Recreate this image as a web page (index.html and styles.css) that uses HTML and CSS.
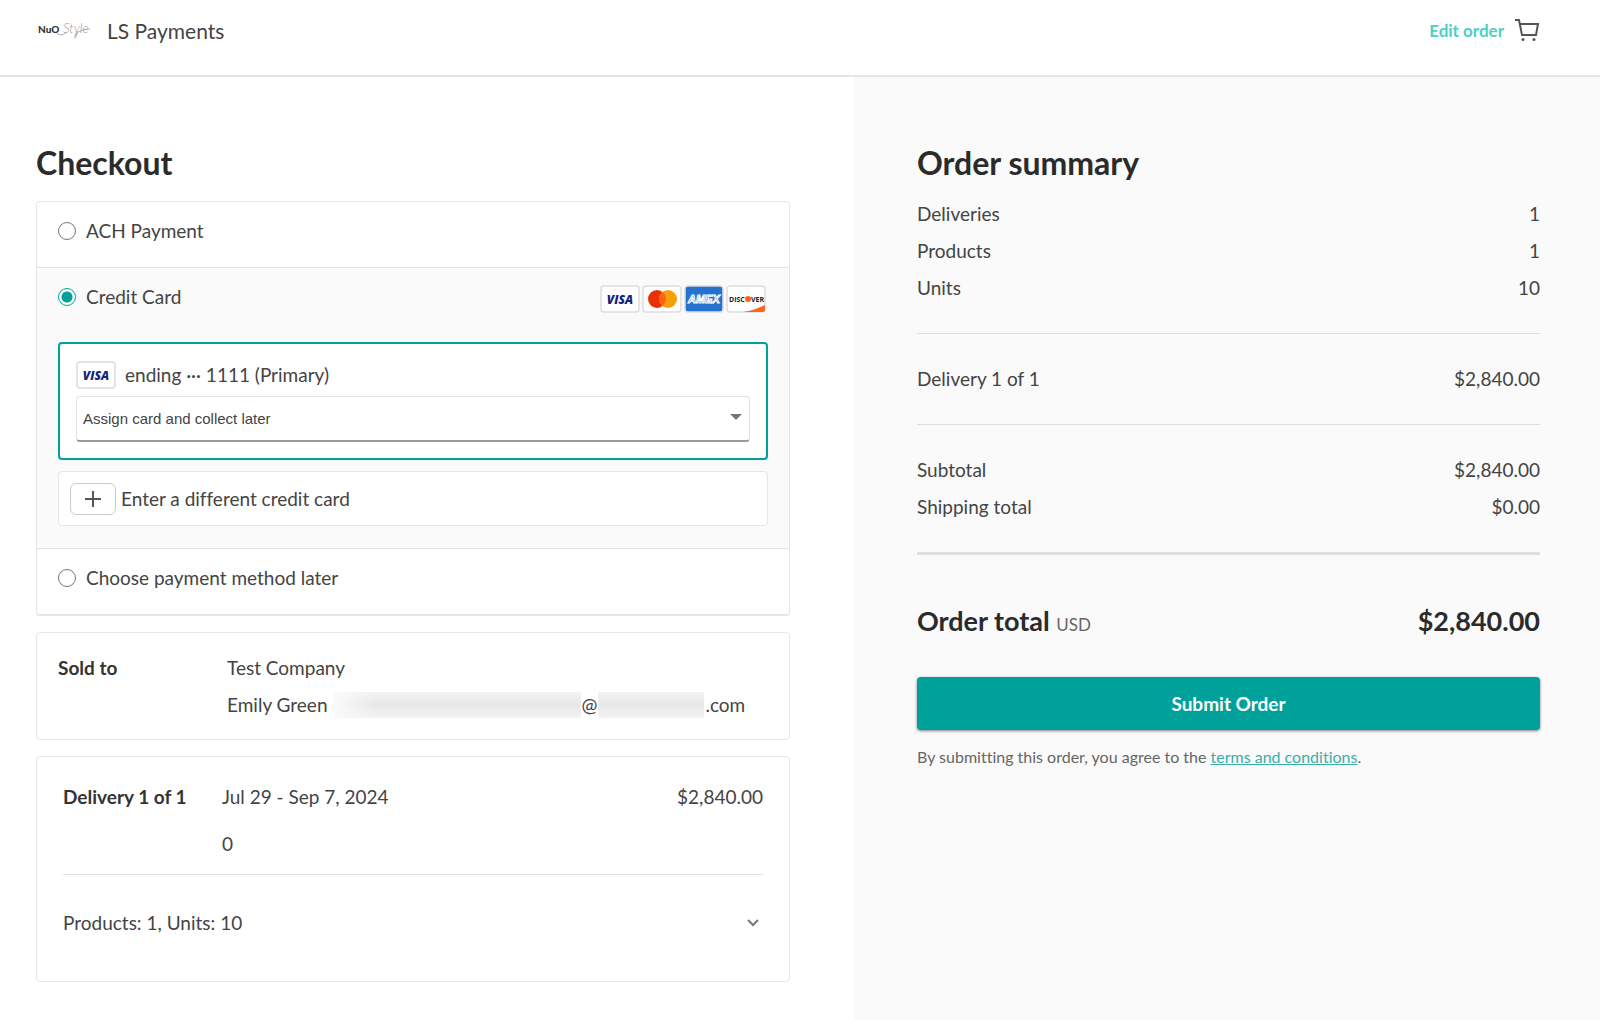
FILE: index.html
```
<!DOCTYPE html>
<html lang="en">
<head>
  <meta charset="UTF-8">
  <meta name="viewport" content="width=device-width, initial-scale=1">
  <title>Checkout - LS Payments</title>
  <link rel="stylesheet" href="styles.css">
</head>
<body>
  <header class="topbar">
    <div class="brand">
      <div class="logo">
        <svg width="58" height="58" viewBox="0 0 58 58" aria-hidden="true">
          <text class="logo-name" x="2" y="32">NuO</text>
          <text class="logo-script" x="27" y="32">Style</text>
          <path d="M21 32c3 3 7 2 10-1M41 30c0 7-3 9-2 5 2-5 7-6 15-7" fill="none" stroke="#aaa" stroke-width="1"/>
        </svg>
      </div>
      <span class="brand-name">LS Payments</span>
    </div>
    <a class="edit-link" href="#">
      Edit order
      <svg width="26" height="24" viewBox="0 0 26 24" fill="none" stroke="#555" stroke-width="2" aria-hidden="true">
        <path d="M1 2h4l3 15h14l2-11H6"/>
        <circle cx="9" cy="21.500" r="1.500" fill="#555" stroke="none"/>
        <circle cx="20" cy="21.500" r="1.500" fill="#555" stroke="none"/>
      </svg>
    </a>
  </header>

  <div class="page">
    <main class="checkout">
      <h1>Checkout</h1>

      <form class="card payment" id="payment-form">
        <div class="method">
          <label class="option"><input type="radio" name="method"> ACH Payment</label>
        </div>

        <div class="method method-active">
          <div class="method-head">
            <label class="option"><input type="radio" name="method" checked> Credit Card</label>
            <div class="card-logos">
              <svg class="pay-icon" viewBox="0 0 40 28" role="img" aria-label="Visa">
                <rect x="1" y="1" width="38" height="26" rx="3" fill="#fff" stroke="#ddd" stroke-width="1.500"/>
                <text class="visa-text" x="20" y="19">VISA</text>
              </svg>
              <svg class="pay-icon" viewBox="0 0 40 28" role="img" aria-label="Mastercard">
                <rect x="1" y="1" width="38" height="26" rx="3" fill="#fff" stroke="#ddd" stroke-width="1.500"/>
                <circle cx="15" cy="14" r="9" fill="#eb2f06"/>
                <circle cx="26" cy="14" r="9" fill="#f79e0b"/>
                <path d="M20.500 6.900a9 9 0 0 1 0 14.200a9 9 0 0 1 0-14.200z" fill="#ff6410"/>
              </svg>
              <svg class="pay-icon" viewBox="0 0 40 28" role="img" aria-label="American Express">
                <rect x="1" y="1" width="38" height="26" rx="3" fill="#2472ce" stroke="#ddd" stroke-width="1.500"/>
                <text class="amex-text" x="20" y="18">AMEX</text>
              </svg>
              <svg class="pay-icon" viewBox="0 0 40 28" role="img" aria-label="Discover">
                <rect x="1" y="1" width="38" height="26" rx="3" fill="#fff" stroke="#ddd" stroke-width="1.500"/>
                <path d="M17 27C25 26 33 23 39 20v5q0 2-2 2z" fill="#ff6320"/>
                <text class="discover-text" x="3" y="17">DISC</text>
                <circle cx="22" cy="14" r="3" fill="#ff6320"/>
                <text class="discover-text" x="25" y="17">VER</text>
              </svg>
            </div>
          </div>

          <div class="saved-card">
            <div class="saved-name">
              <svg class="pay-icon" viewBox="0 0 40 28" role="img" aria-label="Visa">
                <rect x="1" y="1" width="38" height="26" rx="3" fill="#fff" stroke="#ddd" stroke-width="1.500"/>
                <text class="visa-text" x="20" y="19">VISA</text>
              </svg>
              <span>ending ··· 1111 (Primary)</span>
            </div>
            <div class="select-wrap">
              <select aria-label="Card collection">
                <option>Assign card and collect later</option>
              </select>
              <svg class="select-arrow" width="12" height="6" viewBox="0 0 12 6" aria-hidden="true"><path d="M0 0h12L6 6z" fill="#777"/></svg>
            </div>
          </div>

          <div class="new-card">
            <button class="add-btn" type="button" id="add-card" aria-labelledby="add-card-label">
              <svg width="16" height="16" viewBox="0 0 16 16" fill="none" stroke="#555" stroke-width="2" aria-hidden="true"><path d="M8 0v16M0 8h16"/></svg>
            </button>
            <label for="add-card" id="add-card-label">Enter a different credit card</label>
          </div>
        </div>

        <div class="method">
          <label class="option"><input type="radio" name="method"> Choose payment method later</label>
        </div>
      </form>

      <section class="card sold-to">
        <h2>Sold to</h2>
        <div>
          <p>Test Company</p>
          <p class="contact">Emily Green <span class="redacted redacted-user"></span>@<span class="redacted redacted-domain"></span>.com</p>
        </div>
      </section>

      <section class="card delivery">
        <div class="delivery-head">
          <h2>Delivery 1 of 1</h2>
          <div class="delivery-dates">
            <p>Jul 29 - Sep 7, 2024</p>
            <p>0</p>
          </div>
          <span>$2,840.00</span>
        </div>
        <button class="delivery-toggle" type="button">
          Products: 1, Units: 10
          <svg width="12" height="8" viewBox="0 0 12 8" fill="none" stroke="#777" stroke-width="2" aria-hidden="true"><path d="M1 1l5 5 5-5"/></svg>
        </button>
      </section>
    </main>

    <aside class="summary">
      <h1>Order summary</h1>
      <dl class="lines">
        <div><dt>Deliveries</dt><dd>1</dd></div>
        <div><dt>Products</dt><dd>1</dd></div>
        <div><dt>Units</dt><dd>10</dd></div>
      </dl>
      <dl class="lines">
        <div><dt>Delivery 1 of 1</dt><dd>$2,840.00</dd></div>
      </dl>
      <dl class="lines lines-last">
        <div><dt>Subtotal</dt><dd>$2,840.00</dd></div>
        <div><dt>Shipping total</dt><dd>$0.00</dd></div>
      </dl>
      <div class="total">
        <span>Order total <small>USD</small></span>
        <span>$2,840.00</span>
      </div>
      <button class="submit-btn" type="submit" form="payment-form">Submit Order</button>
      <p class="terms">By submitting this order, you agree to the <a href="#">terms and conditions</a>.</p>
    </aside>
  </div>
</body>
</html>
```
FILE: styles.css
```
* {
  box-sizing: border-box;
}

body {
  margin: 0;
  min-height: 100vh;
  display: flex;
  flex-direction: column;
  background-color: #fff;
  color: #444;
  font-family: Lato, sans-serif;
  font-size: 19px;
  font-variant-ligatures: none;
  line-height: 37px;
}

h1, h2, p, dl, dd {
  margin: 0;
}

h1 {
  color: #2b2b2b;
  font-size: 32px;
  font-weight: 700;
  line-height: 40px;
}

h2 {
  color: #333;
  font-size: 19px;
  font-weight: 700;
  line-height: 37px;
}

/* header */
.topbar {
  display: flex;
  justify-content: space-between;
  align-items: center;
  padding: 1px 60px 16px 36px;
  border-bottom: 2px solid #e6e6e6;
}

.brand {
  display: flex;
  align-items: center;
  gap: 13px;
}

.logo {
  width: 58px;
  height: 58px;
  border-radius: 6px;
}

.logo svg {
  display: block;
}

.logo-name {
  font: 900 10px Lato, sans-serif;
  fill: #333;
}

.logo-script {
  font: italic 300 13px Lato, sans-serif;
  fill: #999;
}

.brand-name {
  font-size: 21px;
}

.edit-link {
  display: flex;
  align-items: center;
  gap: 10px;
  color: #4dd0c4;
  font-size: 17px;
  font-weight: 700;
  text-decoration: none;
}

/* columns */
.page {
  flex: 1;
  display: grid;
  grid-template-columns: 854fr 746fr;
}

.checkout {
  padding: 66px 64px 38px 36px;
}

.summary {
  padding: 66px 60px 38px 63px;
  background-color: #fafafa;
}

.card {
  margin-bottom: 16px;
  border: 1px solid #e6e6e6;
  border-radius: 4px;
}

/* payment methods */
.payment {
  margin-top: 18px;
  border-bottom-width: 2px;
}

.method {
  padding: 10px 21px 18px;
}

.method + .method {
  border-top: 1px solid #e2e2e2;
}

.method-active {
  padding-bottom: 22px;
  background-color: #fafafa;
}

.method-head {
  display: flex;
  justify-content: space-between;
  align-items: center;
  margin-bottom: 27px;
}

.option {
  display: flex;
  align-items: center;
  gap: 10px;
}

.option input {
  appearance: none;
  width: 18px;
  height: 18px;
  margin: 0;
  border: 1px solid #777;
  border-radius: 50%;
  background-color: #fff;
}

.option input:checked {
  border-color: #00a19b;
  background: radial-gradient(circle, #00a19b 5px, #fff 6px);
}

.card-logos {
  display: flex;
  gap: 2px;
  padding: 4px 2px 0 0;
}

.pay-icon {
  width: 40px;
  height: 28px;
}

.visa-text {
  font: italic 900 12px "Open Sans", sans-serif;
  fill: #14237e;
  text-anchor: middle;
}

.amex-text {
  font: italic 700 11px "Liberation Sans", sans-serif;
  fill: #2472ce;
  stroke: #fff;
  stroke-width: 1px;
  text-anchor: middle;
}

.discover-text {
  font: 700 7px "Open Sans", sans-serif;
  fill: #222;
}

.saved-card {
  padding: 12px 16px 16px;
  border: 2px solid #00a19b;
  border-radius: 4px;
  background-color: #fff;
}

.saved-name {
  display: flex;
  align-items: center;
  gap: 9px;
  margin-bottom: 3px;
}

.select-wrap {
  position: relative;
}

.select-wrap select {
  display: block;
  appearance: none;
  width: 100%;
  height: 46px;
  padding: 0 30px 0 6px;
  border: 1px solid #e2e2e2;
  border-bottom: 2px solid #999;
  border-radius: 4px;
  background-color: #fff;
  color: #444;
  font-family: "Liberation Sans", Arial, sans-serif;
  font-size: 15px;
}

.select-arrow {
  position: absolute;
  top: 18px;
  right: 8px;
  pointer-events: none;
}

.new-card {
  display: flex;
  align-items: center;
  gap: 5px;
  margin-top: 11px;
  padding: 8px 11px;
  border: 1px solid #e6e6e6;
  border-radius: 4px;
  background-color: #fff;
}

.add-btn {
  display: flex;
  justify-content: center;
  align-items: center;
  width: 46px;
  height: 32px;
  padding: 0;
  border: 1px solid #ccc;
  border-radius: 6px;
  background-color: #fff;
}

/* sold to */
.sold-to {
  display: grid;
  grid-template-columns: 169px 1fr;
  padding: 16px 21px;
}

.contact {
  display: flex;
  align-items: center;
  white-space: nowrap;
}

.redacted {
  height: 26px;
  background: linear-gradient(#f3f3f3, #e8e8e8 50%, #f3f3f3);
}

.redacted-user {
  width: 247px;
  margin: 0 1px 0 6px;
  background: linear-gradient(90deg, #fafafa, transparent 40px), linear-gradient(#f3f3f3, #e8e8e8 50%, #f3f3f3);
}

.redacted-domain {
  width: 106px;
  margin: 0 1px;
}

/* delivery */
.delivery {
  margin-bottom: 0;
  padding: 21px 26px 40px;
}

.delivery-head {
  display: grid;
  grid-template-columns: 159px 1fr auto;
  padding-bottom: 12px;
  border-bottom: 1px solid #e2e2e2;
}

.delivery-dates {
  display: grid;
  gap: 10px;
}

.delivery-toggle {
  display: flex;
  justify-content: space-between;
  align-items: center;
  width: 100%;
  margin-top: 29px;
  padding: 0 4px 0 0;
  border: none;
  background: none;
  color: inherit;
  font: inherit;
}

/* order summary */
.lines {
  padding: 26px 0 27px;
  border-bottom: 1px solid #dedede;
}

.lines:first-of-type {
  padding-top: 12px;
}

.lines-last {
  border-bottom: 3px solid #dedede;
}

.lines div {
  display: flex;
  justify-content: space-between;
}

.total {
  display: flex;
  justify-content: space-between;
  margin-top: 47px;
  color: #2b2b2b;
  font-size: 27px;
  font-weight: 700;
}

.total small {
  color: #666;
  font-size: 17px;
  font-weight: 400;
}

.submit-btn {
  display: block;
  width: 100%;
  height: 53px;
  margin-top: 34px;
  border: none;
  border-radius: 4px;
  background-color: #00a19b;
  box-shadow: 0 1px 3px rgba(0, 0, 0, 0.5);
  color: #fff;
  font-family: inherit;
  font-size: 19px;
  font-weight: 700;
}

.terms {
  margin-top: 8px;
  color: #666;
  font-size: 16px;
}

.terms a {
  color: #3aafa9;
}
```
